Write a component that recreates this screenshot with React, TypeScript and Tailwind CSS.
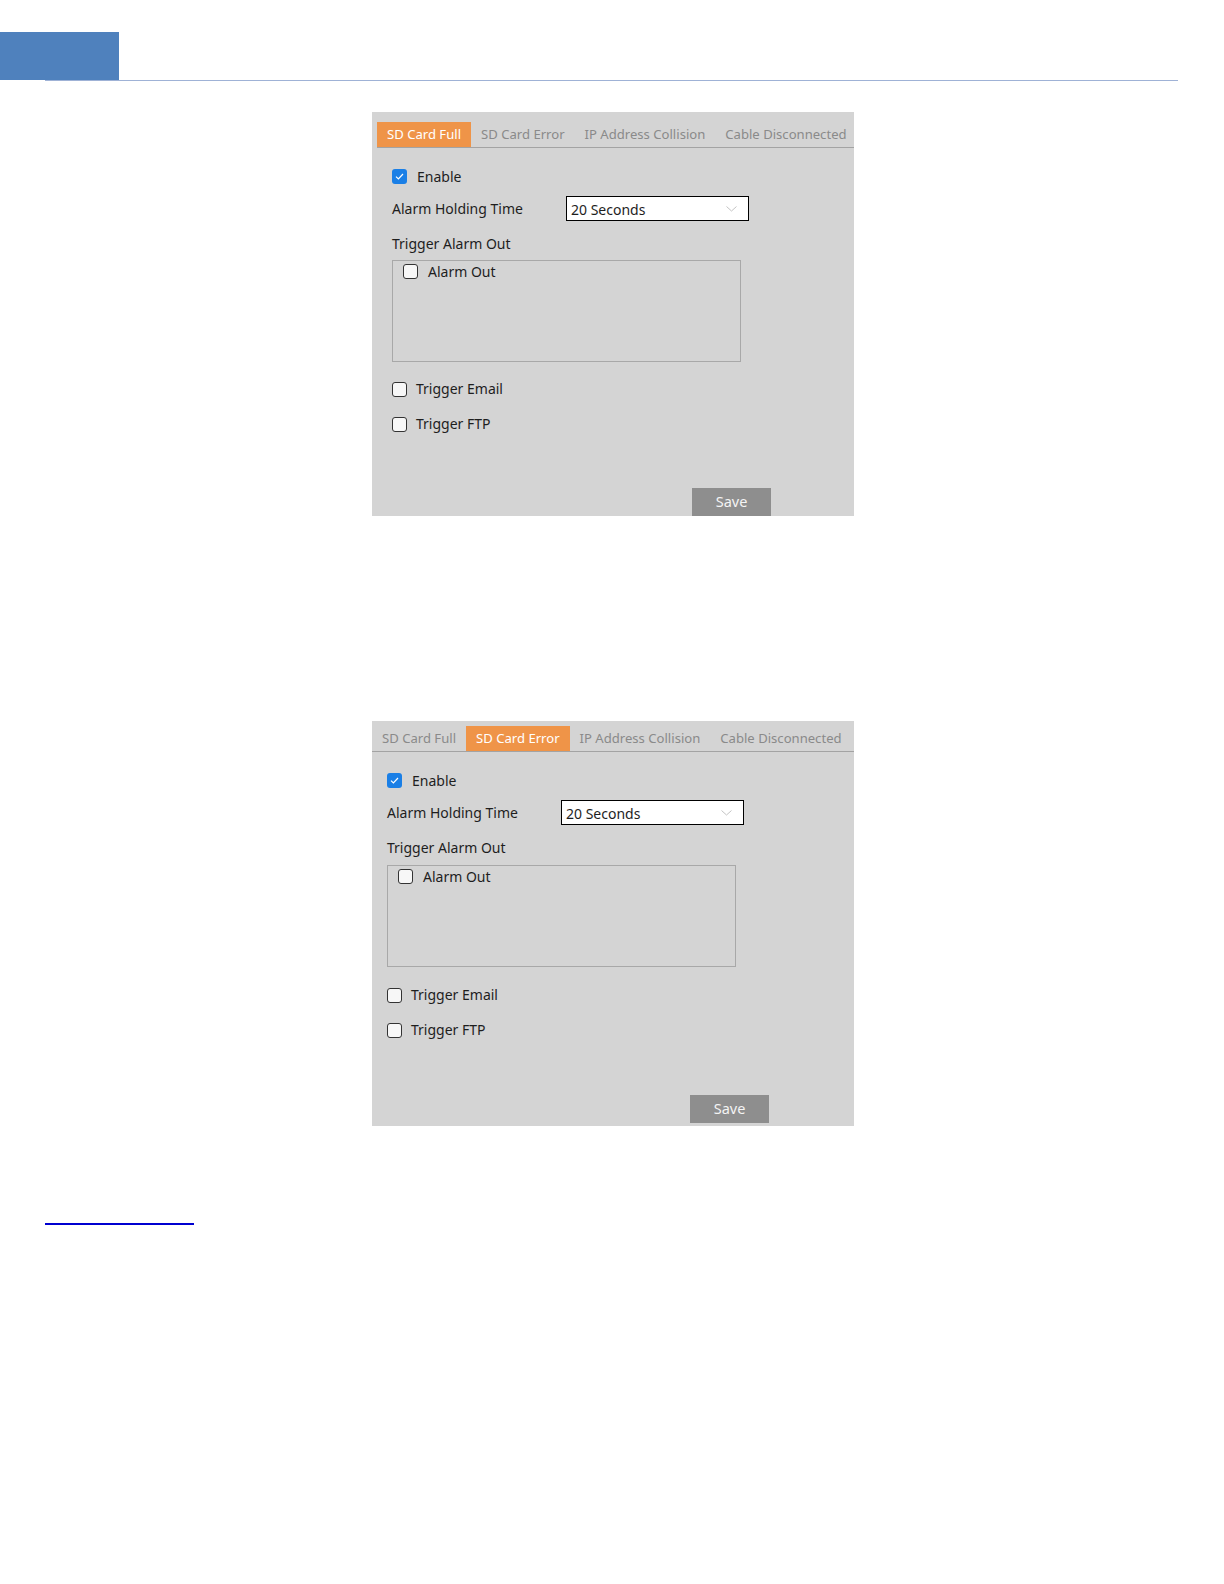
import React from "react";

const tabs = ["SD Card Full", "SD Card Error", "IP Address Collision", "Cable Disconnected"];

function Check({ checked }: { checked?: boolean }) {
  if (checked) {
    return (
      <span className="flex h-[15px] w-[15px] shrink-0 items-center justify-center rounded-[3px] bg-[#1a7fe6]">
        <svg width="9" height="7" viewBox="0 0 9 7" fill="none">
          <path d="M1 3.6 3.4 6 8 1" stroke="white" strokeWidth="1.2" />
        </svg>
      </span>
    );
  }
  return <span className="h-[15px] w-[15px] shrink-0 rounded-[3px] border-[1.5px] border-[#333] bg-[#f7f7f7]" />;
}

function AlarmPanel({ active, inset }: { active: number; inset?: boolean }) {
  return (
    <div
      className={`flex h-[405px] w-[482px] flex-col overflow-hidden bg-[#d4d4d4] text-[14px] text-[#1e1e1e] ${
        inset ? "pl-[5px] pt-[10px]" : "pt-[5px]"
      }`}
    >
      {/* tab strip */}
      <div className="flex h-[26px] border-b border-[#a3a3a3]">
        {tabs.map((t, i) => (
          <div
            key={t}
            className={`flex h-[25px] shrink-0 items-center whitespace-nowrap px-[10px] text-[13.1px] ${
              i === active ? "bg-[#ef9448] text-white" : "text-[#8a8a8a]"
            }`}
          >
            {t}
          </div>
        ))}
      </div>

      <div className="flex flex-col pl-[15px]">
        <div className="mt-[18px] flex h-[20px] items-center gap-[10px]">
          <Check checked />
          <span>Enable</span>
        </div>

        <div className="mt-[10px] flex h-[25px] items-center">
          <span className="w-[174px]">Alarm Holding Time</span>
          <div className="flex h-[25px] w-[183px] items-center justify-between border border-black bg-white pl-[4px] pr-[11px]">
            <span className="pt-[2px]">20 Seconds</span>
            <svg width="11" height="6" viewBox="0 0 11 6" fill="none">
              <path d="M0.5 0.5 5.5 5 10.5 0.5" stroke="#c4c4c4" strokeWidth="1" />
            </svg>
          </div>
        </div>

        <div className="mt-[13px] h-[20px] leading-[20px]">Trigger Alarm Out</div>

        <div className={`${inset ? "mt-[6px]" : "mt-[7px]"} h-[102px] w-[349px] border border-[#a8a8a8] pl-[10px] pt-0`}>
          <div className="flex h-[20px] items-center gap-[10px]">
            <Check />
            <span>Alarm Out</span>
          </div>
        </div>

        <div className={`${inset ? "mt-[17px]" : "mt-[18px]"} flex h-[20px] items-center gap-[9px]`}>
          <Check />
          <span className="-mt-[2px]">Trigger Email</span>
        </div>
        <div className="mt-[15px] flex h-[20px] items-center gap-[9px]">
          <Check />
          <span className="-mt-[2px]">Trigger FTP</span>
        </div>

        <button
          className={`${inset ? "ml-[300px] mt-[54px]" : "ml-[303px] mt-[55px]"} h-[28px] w-[79px] bg-[#8e8e8e] text-[14.5px] text-[#f4f4f4]`}
        >
          Save
        </button>
      </div>
    </div>
  );
}

export default function App() {
  return (
    <div className="min-h-[1584px] w-[1224px] bg-white font-['Noto_Sans','Open_Sans',sans-serif]">
      {/* page header */}
      <div className="pt-[32px]">
        <div className="h-[48px] w-[119px] bg-[#4f81bd]" />
        <div className="ml-[45px] h-px w-[1133px] bg-[#9fb2d6]" />
      </div>

      <div className="ml-[372px] mt-[31px] h-[404px] overflow-hidden">
        <AlarmPanel active={0} inset />
      </div>

      <div className="ml-[372px] mt-[205px]">
        <AlarmPanel active={1} />
      </div>

      <div className="ml-[45px] mt-[97px] h-[2px] w-[149px] bg-[#0000d0]" />
    </div>
  );
}
